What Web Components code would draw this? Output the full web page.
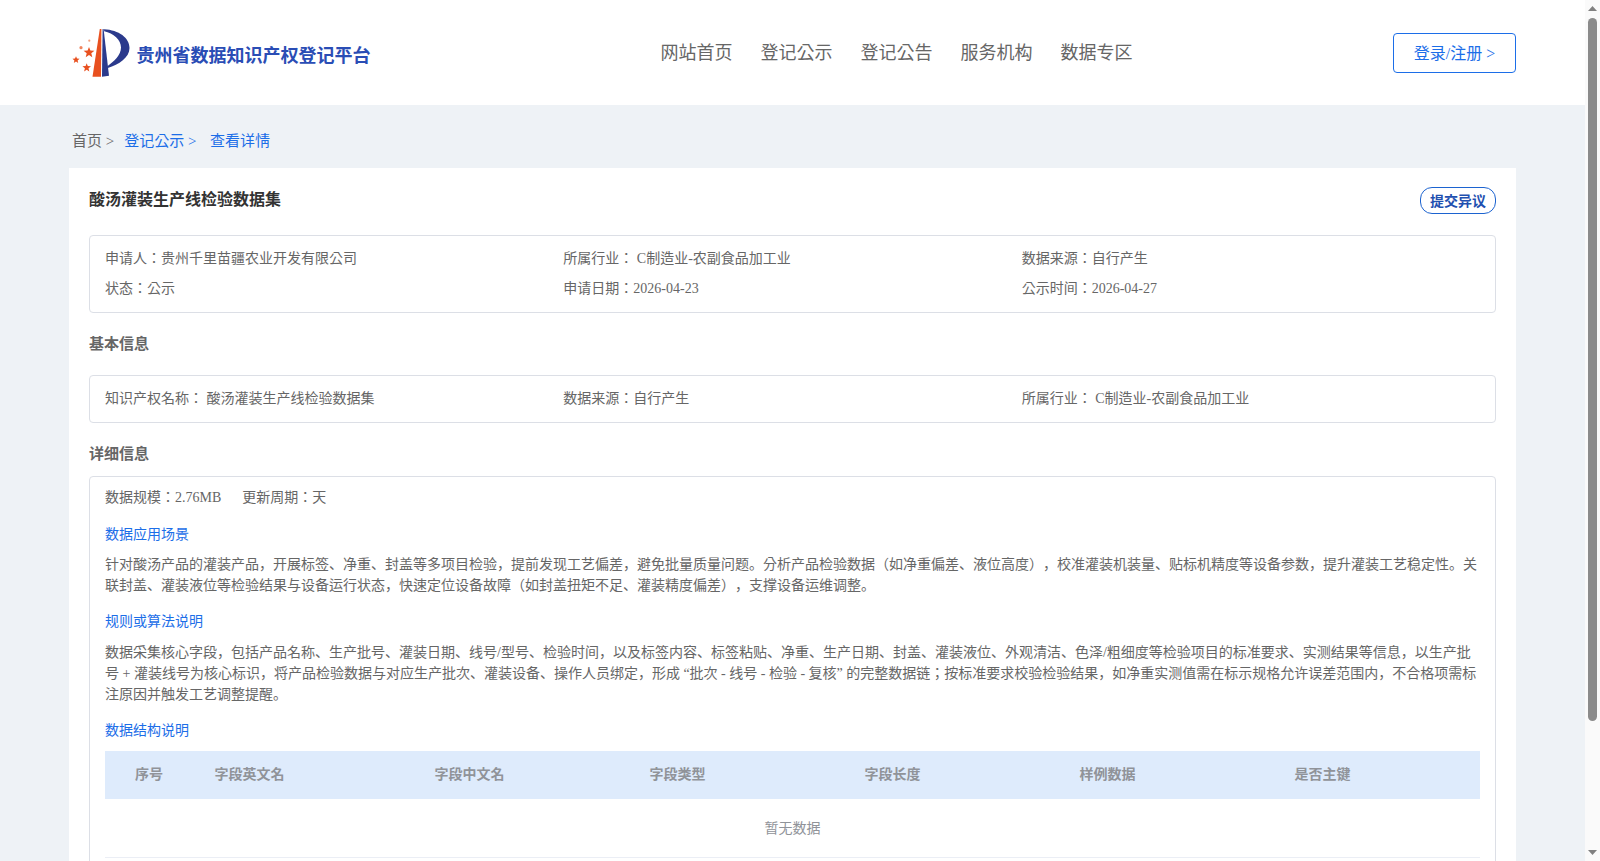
<!DOCTYPE html>
<html>
<head>
<meta charset="utf-8">
<title>贵州省数据知识产权登记平台</title>
<style>
    html, body { height: 100%; overflow: hidden; }
    body {
        margin: 0;
        color: #666;
        font-family: "Liberation Serif", "Noto Sans CJK KR", serif;
        text-spacing-trim: space-all;
    }
</style>
</head>
<body>
<page-shell>
    <site-header></site-header>
    <bread-crumb></bread-crumb>
    <detail-card heading="酸汤灌装生产线检验数据集">
        <info-box>
            <span>申请人：贵州千里苗疆农业开发有限公司</span>
            <span>所属行业： C制造业-农副食品加工业</span>
            <span>数据来源：自行产生</span>
            <span>状态：公示</span>
            <span>申请日期：2026-04-23</span>
            <span>公示时间：2026-04-27</span>
        </info-box>
        <section-title>基本信息</section-title>
        <info-box>
            <span>知识产权名称： 酸汤灌装生产线检验数据集</span>
            <span>数据来源：自行产生</span>
            <span>所属行业： C制造业-农副食品加工业</span>
        </info-box>
        <section-title class="detail">详细信息</section-title>
        <detail-box>
            <div class="meta"><span>数据规模：2.76MB</span><span>更新周期：天</span></div>
            <sub-title>数据应用场景</sub-title>
            <p>针对酸汤产品的灌装产品，开展标签、净重、封盖等多项目检验，提前发现工艺偏差，避免批量质量问题。分析产品检验数据（如净重偏差、液位高度），校准灌装机装量、贴标机精度等设备参数，提升灌装工艺稳定性。关联封盖、灌装液位等检验结果与设备运行状态，快速定位设备故障（如封盖扭矩不足、灌装精度偏差），支撑设备运维调整。</p>
            <sub-title class="tight">规则或算法说明</sub-title>
            <p>数据采集核心字段，包括产品名称、生产批号、灌装日期、线号/型号、检验时间，以及标签内容、标签粘贴、净重、生产日期、封盖、灌装液位、外观清洁、色泽/粗细度等检验项目的标准要求、实测结果等信息，以生产批号 + 灌装线号为核心标识，将产品检验数据与对应生产批次、灌装设备、操作人员绑定，形成 “批次 - 线号 - 检验 - 复核” 的完整数据链；按标准要求校验检验结果，如净重实测值需在标示规格允许误差范围内，不合格项需标注原因并触发工艺调整提醒。</p>
            <sub-title class="tight">数据结构说明</sub-title>
            <field-table></field-table>
        </detail-box>
    </detail-card>
</page-shell>

<script>
// scrollbars are hidden in the headless browser, so the rail is drawn by hand
class PageShell extends HTMLElement {
    constructor() {
        super();
        this.attachShadow({ mode: 'open' });
        this.shadowRoot.innerHTML = `
        <style>
            :host {
                display: flex;
                height: 100%;
            }
            .view {
                flex: 1;
                min-width: 0;
                overflow-y: auto;
                scrollbar-width: none;
                background: #EEF2F6;
            }
            .rail {
                width: 15px;
                flex-shrink: 0;
                background: #FAFAFA;
                display: flex;
                flex-direction: column;
            }
            .arrow {
                height: 17.5px;
                flex-shrink: 0;
                display: flex;
                justify-content: center;
                align-items: center;
            }
            .track { flex: 1; }
            .thumb {
                width: 9px;
                height: 703px;
                margin-left: 3px;
                border-radius: 4.5px;
                background: #8B8B8B;
            }
            svg { display: block; }
        </style>
        <div class="view"><slot></slot></div>
        <div class="rail">
            <div class="arrow"><svg width="9" height="5"><polygon points="4.5,0 9,5 0,5" fill="#808080"/></svg></div>
            <div class="track"><div class="thumb"></div></div>
            <div class="arrow"><svg width="9" height="5"><polygon points="0,0 9,0 4.5,5" fill="#808080"/></svg></div>
        </div>
        `;
    }
}

class SiteHeader extends HTMLElement {
    constructor() {
        super();
        this.attachShadow({ mode: 'open' });
    }

    connectedCallback() {
        const links = ['网站首页', '登记公示', '登记公告', '服务机构', '数据专区'];
        this.shadowRoot.innerHTML = `
        <style>
            :host {
                display: block;
                background: #FFFFFF;
            }
            .bar {
                height: 105px;
                box-sizing: border-box;
                padding: 0 69px 0 72px;
                display: flex;
                align-items: center;
            }
            .brand {
                display: flex;
                align-items: center;
                gap: 6.5px;
                font-size: 18px;
                font-weight: 700;
                color: #2A4DB5;
            }
            .brand span { position: relative; top: 1px; }
            svg { display: block; flex-shrink: 0; }
            nav {
                display: flex;
                gap: 28px;
                margin-left: 290px;
                font-size: 18px;
                color: #666;
                position: relative;
                top: -2px;
            }
            .login {
                margin-left: auto;
                width: 123px;
                height: 40px;
                box-sizing: border-box;
                padding-bottom: 1px;
                border: 1px solid #1C6EE8;
                border-radius: 4px;
                color: #1C6EE8;
                font-size: 16px;
                display: flex;
                align-items: center;
                justify-content: center;
            }
        </style>
        <div class="bar">
            <div class="brand">
                <svg width="58" height="50" viewBox="72 28 58 50">
                    <polygon points="99.8,29 101.4,29 101,76.7 92.5,76.7" fill="#E8501F"/>
                    <polygon points="102.6,29 103.6,29 109,75.8 102,76.7" fill="#2B3A8C"/>
                    <path d="M104 29.3 C119 30 129.5 38 129.5 48 C129.5 57.5 119 64.5 107.8 68 L107.4 66.2 C114 61.5 121 55 121 47.5 C121 40 113.5 33 104.2 31.2 Z" fill="#2B3A8C"/>
                    <polygon points="89,47 90.4,50.6 94.4,50.8 91.3,53.3 92.3,57.2 89,55 85.7,57.2 86.7,53.3 83.6,50.8 87.6,50.6" fill="#E8501F"/>
                    <polygon points="76,56.3 77,58.6 79.5,58.8 77.6,60.4 78.2,62.9 76,61.5 73.8,62.9 74.4,60.4 72.5,58.8 75,58.6" fill="#E8501F"/>
                    <polygon points="86.7,63.2 87.8,66.1 91,66.3 88.5,68.3 89.3,71.4 86.7,69.7 84.1,71.4 84.9,68.3 82.4,66.3 85.6,66.1" fill="#E8501F"/>
                    <circle cx="81" cy="47.7" r="1.6" fill="#F0855F"/>
                    <circle cx="89.3" cy="40.7" r="1.1" fill="#F0A080"/>
                </svg>
                <span>贵州省数据知识产权登记平台</span>
            </div>
            <nav>${links.map(l => `<span>${l}</span>`).join('')}</nav>
            <div class="login">登录/注册 &gt;</div>
        </div>
        `;
    }
}

class BreadCrumb extends HTMLElement {
    constructor() {
        super();
        this.attachShadow({ mode: 'open' });
        this.shadowRoot.innerHTML = `
        <style>
            :host {
                display: flex;
                gap: 10px;
                height: 63px;
                box-sizing: border-box;
                padding: 25px 0 0 72px;
                font-size: 15px;
                line-height: 22px;
                color: #1C6EE8;
            }
            .home { color: #666; }
            .tail { margin-left: 3.5px; }
        </style>
        <span class="home">首页 &gt;</span>
        <span>登记公示 &gt;</span>
        <span class="tail">查看详情</span>
        `;
    }
}

class DetailCard extends HTMLElement {
    constructor() {
        super();
        this.attachShadow({ mode: 'open' });
    }

    connectedCallback() {
        this.shadowRoot.innerHTML = `
        <style>
            :host {
                display: block;
                margin: 0 69px 103px;
                padding: 20px;
                background: #FFFFFF;
            }
            .top {
                display: flex;
                justify-content: space-between;
                align-items: flex-start;
                height: 47px;
            }
            h1 {
                margin: 0;
                font-size: 16px;
                line-height: 24px;
                font-weight: 700;
                color: #333;
            }
            .btn {
                width: 76px;
                height: 27px;
                box-sizing: border-box;
                padding-bottom: 1px;
                border: 1px solid #1C63D0;
                border-radius: 12px;
                color: #1F50B0;
                font-size: 14px;
                font-weight: 700;
                display: flex;
                align-items: center;
                justify-content: center;
                margin-top: -1px;
            }
        </style>
        <div class="top">
            <h1>${this.getAttribute('heading')}</h1>
            <div class="btn">提交异议</div>
        </div>
        <slot></slot>
        `;
    }
}

class InfoBox extends HTMLElement {
    constructor() {
        super();
        this.attachShadow({ mode: 'open' });
        this.shadowRoot.innerHTML = `
        <style>
            :host {
                display: grid;
                grid-template-columns: repeat(3, 1fr);
                grid-auto-rows: 30px;
                align-items: center;
                padding: 6px 15px 10px;
                border: 1px solid #DCDFE6;
                border-radius: 4px;
                font-size: 14px;
                color: #666;
            }
        </style>
        <slot></slot>
        `;
    }
}

class SectionTitle extends HTMLElement {
    constructor() {
        super();
        this.attachShadow({ mode: 'open' });
        this.shadowRoot.innerHTML = `
        <style>
            :host {
                display: block;
                font-size: 15px;
                line-height: 22px;
                font-weight: 700;
                color: #666;
                padding: 20px 0;
            }
            :host(.detail) { padding: 20px 0 11px; }
        </style>
        <slot></slot>
        `;
    }
}

class DetailBox extends HTMLElement {
    constructor() {
        super();
        this.attachShadow({ mode: 'open' });
        this.shadowRoot.innerHTML = `
        <style>
            :host {
                display: block;
                padding: 10px 15px 20px;
                border: 1px solid #DCDFE6;
                border-radius: 4px;
                font-size: 14px;
                color: #666;
            }
            ::slotted(.meta) {
                display: flex;
                gap: 21px;
                line-height: 22px;
            }
            ::slotted(p) {
                margin: 0;
                line-height: 21px;
            }
        </style>
        <slot></slot>
        `;
    }
}

class SubTitle extends HTMLElement {
    constructor() {
        super();
        this.attachShadow({ mode: 'open' });
        this.shadowRoot.innerHTML = `
        <style>
            :host {
                display: block;
                font-size: 14px;
                line-height: 22px;
                color: #1C6EE8;
                padding: 15px 0 8px;
            }
            :host(.tight) { padding-bottom: 9px; }
        </style>
        <slot></slot>
        `;
    }
}

class FieldTable extends HTMLElement {
    constructor() {
        super();
        this.attachShadow({ mode: 'open' });
    }

    connectedCallback() {
        const cols = ['字段英文名', '字段中文名', '字段类型', '字段长度', '样例数据', '是否主键'];
        this.shadowRoot.innerHTML = `
        <style>
            :host {
                display: block;
                font-size: 14px;
            }
            .head {
                display: grid;
                grid-template-columns: 88px 220px repeat(4, 215px) 1fr;
                height: 48px;
                box-sizing: border-box;
                padding-bottom: 4px;
                align-items: center;
                background: #DEEBFC;
                color: #909399;
                font-weight: 700;
            }
            .head span { padding-left: 21.5px; }
            .head span.no { padding-left: 0; text-align: center; }
            .empty {
                height: 59px;
                box-sizing: border-box;
                padding-bottom: 2px;
                display: flex;
                align-items: center;
                justify-content: center;
                color: #909399;
                border-bottom: 1px solid #EBEEF5;
            }
        </style>
        <div class="head">
            <span class="no">序号</span>
            ${cols.map(c => `<span>${c}</span>`).join('')}
        </div>
        <div class="empty">暂无数据</div>
        `;
    }
}

customElements.define('page-shell', PageShell);
customElements.define('site-header', SiteHeader);
customElements.define('bread-crumb', BreadCrumb);
customElements.define('detail-card', DetailCard);
customElements.define('info-box', InfoBox);
customElements.define('section-title', SectionTitle);
customElements.define('detail-box', DetailBox);
customElements.define('sub-title', SubTitle);
customElements.define('field-table', FieldTable);
</script>
</body>
</html>
